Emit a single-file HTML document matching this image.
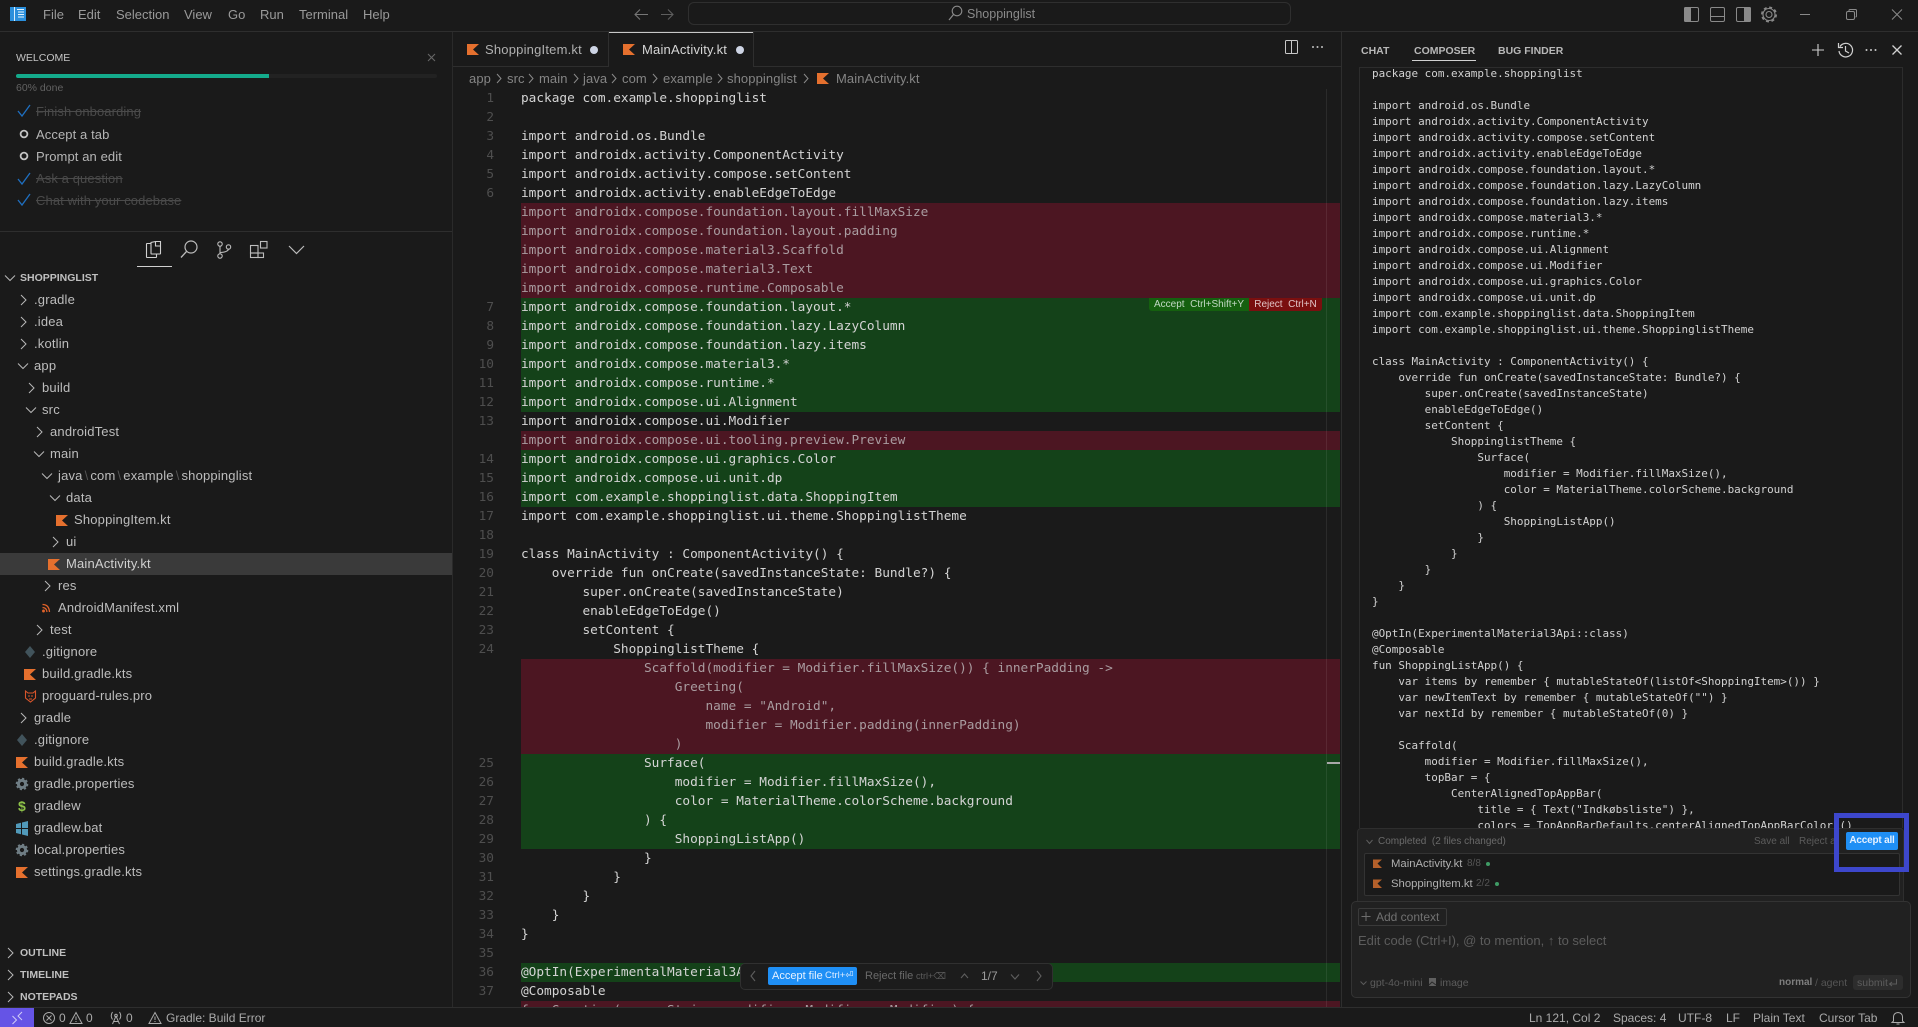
<!DOCTYPE html>
<html><head><meta charset="utf-8"><title>Shoppinglist</title>
<style>
html,body{margin:0;padding:0;background:#1a1a1a;width:1918px;height:1027px;overflow:hidden}
body{position:relative;font-family:"Liberation Sans",sans-serif;font-size:13px;color:#bbb}
.a{position:absolute;white-space:pre}
.m{top:4px;line-height:21px;font-size:13px;color:#9a9a9a}
.t{height:22px;line-height:22px;font-size:13px;color:#bdbdbd;letter-spacing:.18px}
.s{line-height:22px;height:22px;font-size:13px;letter-spacing:.1px}
.d{color:#4a4a4a;text-decoration:line-through}
.h{font-size:10.5px;font-weight:bold;color:#c0c0c0;line-height:22px;height:22px}
.b{top:67px;line-height:23px;color:#858585;font-size:13px;letter-spacing:.1px}
.r{height:19px;left:521px;width:819px}
.red{background:#4c1622}
.grn{background:#144219}
pre{margin:0;font-family:"DejaVu Sans Mono","Liberation Mono",monospace}
.st{top:1009px;height:18px;line-height:18px;font-size:12px;color:#aaa}
.tab{font-size:10.5px;font-weight:bold;color:#b8b8b8;top:40px;line-height:22px}
.f{font-size:10px;color:#6a6a6a;line-height:16px;height:16px}
i{font-style:normal}
.dm{color:#a99ca0}
</style></head><body>

<!-- frames -->
<div class="a" style="left:0;top:31px;width:1918px;height:1px;background:#2e2e2e"></div>
<div class="a" style="left:452px;top:32px;width:1px;height:975px;background:#2a2a2a"></div>
<div class="a" style="left:1341px;top:32px;width:1px;height:975px;background:#2e2e2e"></div>
<div class="a" style="left:0;top:1007px;width:1918px;height:1px;background:#2e2e2e"></div>

<!-- menu -->
<div class="a m" style="left:43px">File</div>
<div class="a m" style="left:78px">Edit</div>
<div class="a m" style="left:116px">Selection</div>
<div class="a m" style="left:184px">View</div>
<div class="a m" style="left:228px">Go</div>
<div class="a m" style="left:260px">Run</div>
<div class="a m" style="left:299px">Terminal</div>
<div class="a m" style="left:363px">Help</div>
<div class="a" style="left:688px;top:2px;width:601px;height:21px;border:1px solid #2f2f2f;border-radius:6px"></div>
<div class="a" style="left:967px;top:4px;line-height:21px;font-size:12.5px;color:#8a8a8a">Shoppinglist</div>

<!-- welcome -->
<div class="a" style="left:16px;top:49px;line-height:18px;font-size:10.5px;color:#c4c4c4">WELCOME</div>
<div class="a" style="left:16px;top:74px;width:421px;height:4px;background:#222;border-radius:2px"></div>
<div class="a" style="left:16px;top:74px;width:253px;height:4px;background:#14ab8c;border-radius:2px 0 0 2px"></div>
<div class="a" style="left:16px;top:79px;line-height:19px;font-size:10.5px;color:#626262">60% done</div>
<div class="a s d" style="left:36px;top:101px">Finish onboarding</div>
<div class="a s" style="left:36px;top:124px;color:#b5b5b5">Accept a tab</div>
<div class="a s" style="left:36px;top:146px;color:#b5b5b5">Prompt an edit</div>
<div class="a s d" style="left:36px;top:168px">Ask a question</div>
<div class="a s d" style="left:36px;top:190px">Chat with your codebase</div>
<div class="a" style="left:0;top:231px;width:452px;height:1px;background:#2e2e2e"></div>
<div class="a" style="left:137px;top:266px;width:35px;height:1px;background:#d0d0d0"></div>
<div class="a h" style="left:20px;top:267px">SHOPPINGLIST</div>

<!-- tree -->
<div class="a" style="left:0;top:553px;width:452px;height:22px;background:#3a3a3a"></div>
<div class="a t" style="left:34px;top:289px">.gradle</div>
<div class="a t" style="left:34px;top:311px">.idea</div>
<div class="a t" style="left:34px;top:333px">.kotlin</div>
<div class="a t" style="left:34px;top:355px">app</div>
<div class="a t" style="left:42px;top:377px">build</div>
<div class="a t" style="left:42px;top:399px">src</div>
<div class="a t" style="left:50px;top:421px">androidTest</div>
<div class="a t" style="left:50px;top:443px">main</div>
<div class="a t" style="left:58px;top:465px">java<i style="color:#555;margin:0 2px">\</i>com<i style="color:#555;margin:0 2px">\</i>example<i style="color:#555;margin:0 2px">\</i>shoppinglist</div>
<div class="a t" style="left:66px;top:487px">data</div>
<div class="a t" style="left:74px;top:509px">ShoppingItem.kt</div>
<div class="a t" style="left:66px;top:531px">ui</div>
<div class="a t" style="left:66px;top:553px;color:#d0d0d0">MainActivity.kt</div>
<div class="a t" style="left:58px;top:575px">res</div>
<div class="a t" style="left:58px;top:597px">AndroidManifest.xml</div>
<div class="a t" style="left:50px;top:619px">test</div>
<div class="a t" style="left:42px;top:641px">.gitignore</div>
<div class="a t" style="left:42px;top:663px">build.gradle.kts</div>
<div class="a t" style="left:42px;top:685px">proguard-rules.pro</div>
<div class="a t" style="left:34px;top:707px">gradle</div>
<div class="a t" style="left:34px;top:729px">.gitignore</div>
<div class="a t" style="left:34px;top:751px">build.gradle.kts</div>
<div class="a t" style="left:34px;top:773px">gradle.properties</div>
<div class="a t" style="left:34px;top:795px">gradlew</div>
<div class="a" style="left:18px;top:795px;height:22px;line-height:22px;font-size:14px;font-weight:bold;color:#8dc149">$</div>
<div class="a t" style="left:34px;top:817px">gradlew.bat</div>
<div class="a t" style="left:34px;top:839px">local.properties</div>
<div class="a t" style="left:34px;top:861px">settings.gradle.kts</div>
<div class="a h" style="left:20px;top:942px">OUTLINE</div>
<div class="a h" style="left:20px;top:964px">TIMELINE</div>
<div class="a h" style="left:20px;top:986px">NOTEPADS</div>

<!-- tabs -->
<div class="a" style="left:453px;top:66px;width:156px;height:1px;background:#2e2e2e"></div>
<div class="a" style="left:753px;top:66px;width:588px;height:1px;background:#2e2e2e"></div>
<div class="a" style="left:608px;top:32px;width:1px;height:34px;background:#2e2e2e"></div>
<div class="a" style="left:753px;top:32px;width:1px;height:34px;background:#2e2e2e"></div>
<div class="a" style="left:609px;top:32px;width:144px;height:1px;background:#c8c8c8"></div>
<div class="a" style="left:485px;top:39px;line-height:22px;font-size:13px;color:#b0b0b0;letter-spacing:.2px">ShoppingItem.kt</div>
<div class="a" style="left:642px;top:39px;line-height:22px;font-size:13px;color:#d6d6d6;letter-spacing:.2px">MainActivity.kt</div>
<div class="a" style="left:590px;top:46px;width:8px;height:8px;border-radius:50%;background:#cdd4e4"></div>
<div class="a" style="left:736px;top:46px;width:8px;height:8px;border-radius:50%;background:#cdd4e4"></div>

<!-- breadcrumb -->
<div class="a b" style="left:469px">app</div>
<div class="a b" style="left:507px">src</div>
<div class="a b" style="left:539px">main</div>
<div class="a b" style="left:583px">java</div>
<div class="a b" style="left:622px">com</div>
<div class="a b" style="left:663px">example</div>
<div class="a b" style="left:727px">shoppinglist</div>
<div class="a b" style="left:836px">MainActivity.kt</div>

<!-- editor -->
<div class="a" style="left:453px;top:89px;width:887px;height:918px;overflow:hidden">
<div style="position:absolute;left:-453px;top:-89px;width:1340px;height:1007px">
<div class="a r red" style="top:203px;height:95px"></div>
<div class="a r grn" style="top:298px;height:114px"></div>
<div class="a r red" style="top:431px"></div>
<div class="a r grn" style="top:450px;height:57px"></div>
<div class="a r red" style="top:659px;height:95px"></div>
<div class="a r grn" style="top:754px;height:95px"></div>
<div class="a r grn" style="top:963px"></div>
<div class="a r red" style="top:1001px;height:6px"></div>
<div class="a" style="left:1326px;top:89px;width:1px;height:918px;background:rgba(255,255,255,.08)"></div>
<div class="a" style="left:1327px;top:762px;width:13px;height:2px;background:#a8a8a8"></div>
<div class="a" style="left:1149px;top:298px;width:100px;height:13px;background:#15600f;border-radius:0 0 0 3px;color:#c2d8c4;font-size:10px;line-height:14px;text-align:center">Accept  Ctrl+Shift+Y</div>
<div class="a" style="left:1249px;top:298px;width:73px;height:13px;background:#7a0f0f;border-radius:0 0 3px 0;color:#e0c4c6;font-size:10px;line-height:14px;text-align:center">Reject  Ctrl+N</div>
<pre class="a" style="left:440px;top:89px;width:54px;height:918px;overflow:hidden;text-align:right;font-size:12.78px;line-height:19px;color:#4e4e4e">1
2
3
4
5
6





7
8
9
10
11
12
13

14
15
16
17
18
19
20
21
22
23
24





25
26
27
28
29
30
31
32
33
34
35
36
37</pre>
<pre class="a" style="left:521px;top:89px;height:918px;overflow:hidden;font-size:12.78px;line-height:19px;color:#d4d4d4">package com.example.shoppinglist

import android.os.Bundle
import androidx.activity.ComponentActivity
import androidx.activity.compose.setContent
import androidx.activity.enableEdgeToEdge
<i class="dm">import androidx.compose.foundation.layout.fillMaxSize
import androidx.compose.foundation.layout.padding
import androidx.compose.material3.Scaffold
import androidx.compose.material3.Text
import androidx.compose.runtime.Composable</i>
import androidx.compose.foundation.layout.*
import androidx.compose.foundation.lazy.LazyColumn
import androidx.compose.foundation.lazy.items
import androidx.compose.material3.*
import androidx.compose.runtime.*
import androidx.compose.ui.Alignment
import androidx.compose.ui.Modifier
<i class="dm">import androidx.compose.ui.tooling.preview.Preview</i>
import androidx.compose.ui.graphics.Color
import androidx.compose.ui.unit.dp
import com.example.shoppinglist.data.ShoppingItem
import com.example.shoppinglist.ui.theme.ShoppinglistTheme

class MainActivity : ComponentActivity() {
    override fun onCreate(savedInstanceState: Bundle?) {
        super.onCreate(savedInstanceState)
        enableEdgeToEdge()
        setContent {
            ShoppinglistTheme {
<i class="dm">                Scaffold(modifier = Modifier.fillMaxSize()) { innerPadding -&gt;
                    Greeting(
                        name = "Android",
                        modifier = Modifier.padding(innerPadding)
                    )</i>
                Surface(
                    modifier = Modifier.fillMaxSize(),
                    color = MaterialTheme.colorScheme.background
                ) {
                    ShoppingListApp()
                }
            }
        }
    }
}

@OptIn(ExperimentalMaterial3Api::class)
@Composable
<i class="dm">fun Greeting(name: String, modifier: Modifier = Modifier) {</i></pre>
</div></div>

<!-- floating toolbar -->
<div class="a" style="left:740px;top:963px;width:311px;height:25px;background:#1c1c1c;border:1px solid #303030;border-radius:5px"></div>
<div class="a" style="left:768px;top:967px;width:89px;height:18px;background:#1f8ff5;border-radius:2px"></div>
<div class="a" style="left:772px;top:967px;line-height:18px;font-size:11px;color:#e8f2ff">Accept file</div>
<div class="a" style="left:825px;top:967px;line-height:18px;font-size:9.5px;color:#dcebff;font-family:'Liberation Sans','DejaVu Sans',sans-serif">Ctrl+⏎</div>
<div class="a" style="left:865px;top:967px;line-height:18px;font-size:11px;color:#6a6a6a">Reject file</div>
<div class="a" style="left:916px;top:967px;line-height:18px;font-size:9px;color:#5c5c5c;font-family:'Liberation Sans','DejaVu Sans',sans-serif">ctrl+⌫</div>
<div class="a" style="left:981px;top:967px;line-height:18px;font-size:12px;color:#9c9c9c">1/7</div>

<!-- composer -->
<div class="a tab" style="left:1361px">CHAT</div>
<div class="a tab" style="left:1414px">COMPOSER</div>
<div class="a tab" style="left:1498px">BUG FINDER</div>
<div class="a" style="left:1412px;top:60px;width:64px;height:1px;background:#d0d0d0"></div>
<div class="a" style="left:1359px;top:67px;width:542px;height:760px;border:1px solid #2c2c2c;border-bottom:0"></div>
<div class="a" style="left:1360px;top:68px;width:541px;height:760px;overflow:hidden">
<pre class="a" style="left:12px;top:-2px;font-size:10.95px;line-height:16px;color:#d2d2d2">package com.example.shoppinglist

import android.os.Bundle
import androidx.activity.ComponentActivity
import androidx.activity.compose.setContent
import androidx.activity.enableEdgeToEdge
import androidx.compose.foundation.layout.*
import androidx.compose.foundation.lazy.LazyColumn
import androidx.compose.foundation.lazy.items
import androidx.compose.material3.*
import androidx.compose.runtime.*
import androidx.compose.ui.Alignment
import androidx.compose.ui.Modifier
import androidx.compose.ui.graphics.Color
import androidx.compose.ui.unit.dp
import com.example.shoppinglist.data.ShoppingItem
import com.example.shoppinglist.ui.theme.ShoppinglistTheme

class MainActivity : ComponentActivity() {
    override fun onCreate(savedInstanceState: Bundle?) {
        super.onCreate(savedInstanceState)
        enableEdgeToEdge()
        setContent {
            ShoppinglistTheme {
                Surface(
                    modifier = Modifier.fillMaxSize(),
                    color = MaterialTheme.colorScheme.background
                ) {
                    ShoppingListApp()
                }
            }
        }
    }
}

@OptIn(ExperimentalMaterial3Api::class)
@Composable
fun ShoppingListApp() {
    var items by remember { mutableStateOf(listOf&lt;ShoppingItem&gt;()) }
    var newItemText by remember { mutableStateOf("") }
    var nextId by remember { mutableStateOf(0) }

    Scaffold(
        modifier = Modifier.fillMaxSize(),
        topBar = {
            CenterAlignedTopAppBar(
                title = { Text("Indkøbsliste") },
                colors = TopAppBarDefaults.centerAlignedTopAppBarColors()</pre>
</div>

<!-- completed panel -->
<div class="a" style="left:1357px;top:828px;width:545px;height:80px;background:#212121;border:1px solid #2e2e2e;border-radius:4px 4px 0 0"></div>
<div class="a f" style="left:1378px;top:834px">Completed  (2 files changed)</div>
<div class="a f" style="left:1754px;top:834px;color:#5c5c5c">Save all</div>
<div class="a f" style="left:1799px;top:834px;color:#5c5c5c;width:35px;overflow:hidden">Reject all</div>
<div class="a" style="left:1846px;top:832px;width:52px;height:18px;background:#1f8ff5;border-radius:2px;color:#e6f1ff;font-size:10px;font-weight:bold;letter-spacing:-.2px;line-height:18px;text-align:center">Accept all</div>
<div class="a" style="left:1364px;top:853px;width:534px;height:41px;background:#1a1a1a;border:1px solid #333;border-radius:2px"></div>
<div class="a" style="left:1391px;top:856px;line-height:16px;font-size:11.3px;color:#b0b0b0">MainActivity.kt</div>
<div class="a" style="left:1467px;top:856px;line-height:16px;font-size:10px;color:#555">8/8</div>
<div class="a" style="left:1486px;top:862px;width:4px;height:4px;border-radius:50%;background:#3f9b65"></div>
<div class="a" style="left:1391px;top:876px;line-height:16px;font-size:11.3px;color:#b0b0b0">ShoppingItem.kt</div>
<div class="a" style="left:1476px;top:876px;line-height:16px;font-size:10px;color:#555">2/2</div>
<div class="a" style="left:1495px;top:882px;width:4px;height:4px;border-radius:50%;background:#3f9b65"></div>

<!-- input -->
<div class="a" style="left:1351px;top:901px;width:558px;height:95px;background:#212121;border:1px solid #333;border-radius:5px"></div>
<div class="a" style="left:1358px;top:908px;width:87px;height:16px;border:1px solid #3a3a3a;border-radius:2px"></div>
<div class="a" style="left:1376px;top:908px;line-height:18px;font-size:12px;color:#717171">Add context</div>
<div class="a" style="left:1358px;top:932px;line-height:18px;font-size:13px;color:#5c5c5c;font-family:'Liberation Sans','DejaVu Sans',sans-serif">Edit code (Ctrl+I), @ to mention, ↑ to select</div>
<div class="a" style="left:1370px;top:975px;line-height:16px;font-size:10.5px;color:#5c5c5c">gpt-4o-mini</div>
<div class="a" style="left:1440px;top:975px;line-height:16px;font-size:10.5px;color:#5c5c5c">image</div>
<div class="a" style="left:1779px;top:975px;line-height:16px;font-size:10px;font-weight:bold;color:#7e7e7e">normal</div>
<div class="a" style="left:1815px;top:975px;line-height:16px;font-size:10.5px;color:#555">/ agent</div>
<div class="a" style="left:1853px;top:975px;width:50px;height:15px;background:#2d2d2d;border-radius:3px"></div>
<div class="a" style="left:1857px;top:975px;line-height:16px;font-size:10.5px;color:#5c5c5c">submit</div>

<!-- status -->
<div class="a" style="left:0;top:1008px;width:34px;height:19px;background:#6554e6"></div>
<div class="a st" style="left:59px">0</div>
<div class="a st" style="left:86px">0</div>
<div class="a st" style="left:126px">0</div>
<div class="a st" style="left:166px">Gradle: Build Error</div>
<div class="a st" style="left:1529px">Ln 121, Col 2</div>
<div class="a st" style="left:1613px">Spaces: 4</div>
<div class="a st" style="left:1678px">UTF-8</div>
<div class="a st" style="left:1726px">LF</div>
<div class="a st" style="left:1753px">Plain Text</div>
<div class="a st" style="left:1819px">Cursor Tab</div>

<!-- all icons -->
<svg class="a" style="left:0;top:0" width="1918" height="1027" viewBox="0 0 1918 1027" fill="none">
<defs>
<path id="k" d="M0 0H12L6 5.5L12 11H0Z" fill="#e5702e"/>
<path id="r" d="M-2-5 3 0-2 5" stroke="#b8b8b8" stroke-width="1"/>
<path id="w" d="M-5-2.5 0 2.5 5-2.5" stroke="#b8b8b8" stroke-width="1"/>
<g id="g"><circle r="3.6" stroke="#6f7d84" stroke-width="3"/><circle r="5.4" stroke="#6f7d84" stroke-width="1.8" stroke-dasharray="2.2 2"/></g>
<path id="cb" d="M-6 0-2 5 6-6" stroke="#1f6fc0" stroke-width="1.3"/>
</defs>
<!-- logo -->
<rect x="10" y="7" width="16" height="14" fill="#2a8fdc"/>
<rect x="14" y="7" width="1" height="14" fill="#d8eefc"/>
<path d="M17 9.5H24M18 12H24M18 14.5H24M18 17H24" stroke="#e6f4fd" stroke-width="1"/>
<!-- nav -->
<path d="M648 14.5H635M640 9.5 635 14.5 640 19.5" stroke="#777" stroke-width="1.1"/>
<path d="M661 14.5H673M668 9.5 673 14.5 668 19.5" stroke="#5e5e5e" stroke-width="1.1"/>
<circle cx="957" cy="11" r="4.8" stroke="#8a8a8a" stroke-width="1.1"/><path d="M953.5 14.5 949 20" stroke="#8a8a8a" stroke-width="1.2"/>
<!-- window icons -->
<rect x="1684.5" y="7.5" width="14" height="14" rx="1.5" stroke="#8a8a8a"/><rect x="1684" y="7" width="7" height="15" rx="1.5" fill="#8a8a8a"/>
<rect x="1710.5" y="7.5" width="14" height="14" rx="1.5" stroke="#8a8a8a"/><path d="M1711 16.5H1724" stroke="#8a8a8a"/>
<rect x="1736.5" y="7.5" width="14" height="14" rx="1.5" stroke="#8a8a8a"/><rect x="1744" y="7" width="7" height="15" rx="1.5" fill="#8a8a8a"/>
<circle cx="1769" cy="14.5" r="3" stroke="#8a8a8a" stroke-width="1.1"/><circle cx="1769" cy="14.5" r="6" stroke="#8a8a8a" stroke-width="1.1"/><circle cx="1769" cy="14.5" r="7.2" stroke="#8a8a8a" stroke-width="1.6" stroke-dasharray="3 2.65"/>
<path d="M1800 14.5H1810" stroke="#8a8a8a" stroke-width="1"/>
<rect x="1846.5" y="11.5" width="8" height="8" rx="1.5" stroke="#8a8a8a"/><path d="M1849 11V10.5Q1849 9.5 1850 9.5H1855.5Q1856.5 9.5 1856.5 10.5V16Q1856.5 17 1855.5 17" stroke="#8a8a8a"/>
<path d="M1892 9.5 1902 19.5M1902 9.5 1892 19.5" stroke="#8a8a8a" stroke-width="1"/>
<!-- welcome -->
<path d="M428 54 435 61M435 54 428 61" stroke="#666" stroke-width="1.1"/>
<use href="#cb" x="24" y="111"/><use href="#cb" x="24" y="179"/><use href="#cb" x="24" y="200"/>
<circle cx="24" cy="134" r="3.4" stroke="#c4c4c4" stroke-width="1.8"/><circle cx="24" cy="156" r="3.4" stroke="#c4c4c4" stroke-width="1.8"/>
<!-- activity icons -->
<path d="M150.5 243.5H147Q146.500 243.500 146.500 244V257Q146.500 257.500 147 257.500H156Q156.500 257.500 156.500 257V254" stroke="#d0d0d0" stroke-width="1.1"/>
<path d="M151 246V242.500L155.500 241.500H160.500V253.500Q160.500 254 160 254H151.500Q151 254 151 253.500V246M155.500 241.500V246H160.500" stroke="#d0d0d0" stroke-width="1.1"/>
<circle cx="191" cy="247" r="6" stroke="#bcbcbc" stroke-width="1.2"/><path d="M186.500 251.500 181 257.500" stroke="#bcbcbc" stroke-width="1.3"/>
<circle cx="220" cy="244" r="2.2" stroke="#bcbcbc" stroke-width="1.1"/><circle cx="220" cy="256" r="2.2" stroke="#bcbcbc" stroke-width="1.1"/><circle cx="228.500" cy="247" r="2.2" stroke="#bcbcbc" stroke-width="1.1"/><path d="M220 246V254M228.500 249.200Q228 252 220.500 252.500" stroke="#bcbcbc" stroke-width="1.1"/>
<rect x="250.500" y="245.500" width="7.500" height="7.500" stroke="#bcbcbc" stroke-width="1.1"/><rect x="250.500" y="253" width="7.500" height="4.500" stroke="#bcbcbc" stroke-width="1.1"/><rect x="258" y="253" width="5.500" height="4.500" stroke="#bcbcbc" stroke-width="1.1"/><rect x="260.500" y="241.500" width="6.500" height="6.500" stroke="#bcbcbc" stroke-width="1.1"/>
<path d="M289 246 296.500 253.500 304 246" stroke="#bcbcbc" stroke-width="1.2"/>
<!-- tree chevrons -->
<use href="#w" x="10" y="278"/>
<use href="#r" x="23" y="300"/><use href="#r" x="23" y="322"/><use href="#r" x="23" y="344"/>
<use href="#w" x="23" y="366"/><use href="#r" x="31" y="388"/><use href="#w" x="31" y="410"/>
<use href="#r" x="39" y="432"/><use href="#w" x="39" y="454"/><use href="#w" x="47" y="476"/>
<use href="#w" x="55" y="498"/><use href="#r" x="55" y="542"/><use href="#r" x="47" y="586"/>
<use href="#r" x="39" y="630"/><use href="#r" x="23" y="718"/>
<use href="#r" x="10" y="953"/><use href="#r" x="10" y="975"/><use href="#r" x="10" y="997"/>
<!-- tree icons -->
<use href="#k" x="56" y="515"/><use href="#k" x="48" y="559"/>
<use href="#k" x="24" y="669"/><use href="#k" x="16" y="757"/><use href="#k" x="16" y="867"/>
<g stroke="#e0622a" stroke-width="1.3"><path d="M42.500 604.500Q49 604.500 49.500 612M42.500 607.500Q46.500 607.500 47 612"/><circle cx="43.500" cy="611" r=".8" fill="#e0622a"/></g>
<path d="M30 646 35 652 30 658 25 652Z" fill="#41535b"/><path d="M22 734 27 740 22 746 17 740Z" fill="#41535b"/>
<path d="M25.500 691 28 693H33L35.500 691V698L30.500 702 25.500 698Z" stroke="#d9552b" stroke-width="1.1"/><path d="M28 696H30M31 696H33M29 699H32" stroke="#d9552b"/>
<use href="#g" x="22" y="784"/><use href="#g" x="22" y="850"/>
<path d="M16 824 21 822.800V828H16ZM22 822.500 28 821V828H22ZM16 829H21V834.200L16 833ZM22 829H28V836L22 834.500Z" fill="#519aba"/>
<!-- tab / breadcrumb icons -->
<use href="#k" x="467" y="44"/><use href="#k" x="623" y="44"/><use href="#k" x="817" y="73"/>
<g stroke="#8a8a8a" stroke-width="1"><path d="M497 74 501 78.500 497 83M529 74 533 78.500 529 83M574 74 578 78.500 574 83M612 74 616 78.500 612 83M653 74 657 78.500 653 83M718 74 722 78.500 718 83M804 74 808 78.500 804 83"/></g>
<!-- split + dots -->
<rect x="1285.500" y="40.500" width="12" height="13" rx="1" stroke="#c8c8c8"/><path d="M1291.500 40V54" stroke="#c8c8c8"/>
<g fill="#c0c0c0"><circle cx="1313" cy="47" r="1"/><circle cx="1317.500" cy="47" r="1"/><circle cx="1322" cy="47" r="1"/></g>
<!-- panel icons -->
<path d="M1812 50H1824M1818 44V56" stroke="#d0d0d0" stroke-width="1.1"/>
<path d="M1840 46.500A6.800 6.800 0 1 1 1839 51M1838.500 43V47.500H1843M1845.500 46V51L1849 53" stroke="#d0d0d0" stroke-width="1.2"/>
<g fill="#c8c8c8"><circle cx="1866.500" cy="50" r="1"/><circle cx="1871" cy="50" r="1"/><circle cx="1875.500" cy="50" r="1"/></g>
<path d="M1892.500 45.500 1901.500 54.500M1901.500 45.500 1892.500 54.500" stroke="#d0d0d0" stroke-width="1.3"/>
<!-- toolbar chevrons -->
<g stroke="#5e5e5e" stroke-width="1.1"><path d="M755 971 751 976 755 981M961 978 964.500 974 968 978M1011 974.500 1015 979 1019 974.500M1037 971 1041 976 1037 981"/></g>
<!-- completed -->
<path d="M1366.500 840 1369.500 843.500 1372.500 840" stroke="#5e5e5e"/>
<path d="M1373 859.500H1382L1377.500 863.500 1382 868H1373Z" fill="#b4602b"/>
<path d="M1373 879.500H1382L1377.500 883.500 1382 888H1373Z" fill="#b4602b"/>
<path d="M1366 912V921M1361.500 916.500H1370.500" stroke="#6e6e6e"/>
<path d="M1360.500 981.500 1363.500 984.500 1366.500 981.500" stroke="#5a5a5a"/>
<rect x="1429" y="978" width="7" height="8" fill="#606060"/><path d="M1429 985 1432 982 1436 985" stroke="#2a2a2a"/>
<path d="M1896.500 979V984H1890M1892 982 1889.500 984 1892 986" stroke="#5c5c5c"/>
<!-- highlight -->
<rect x="1836.500" y="815.500" width="70" height="54" stroke="#3d47cc" stroke-width="5"/>
<!-- status icons -->
<path d="M12.500 1016 16.500 1020 12.500 1024M22 1012 18 1016 22 1020" stroke="#d0ccf6" stroke-width="1"/>
<circle cx="49" cy="1018" r="5.500" stroke="#aaa"/><path d="M46.500 1015.500 51.500 1020.500M51.500 1015.500 46.500 1020.500" stroke="#aaa"/>
<path d="M76 1012.500 82 1023.500H70ZM76 1016.500V1020M76 1021V1022" stroke="#aaa"/>
<path d="M116 1016 112.500 1024M116 1016 119.500 1024M113.500 1021.500H118.500M112.500 1012Q110 1016 112.500 1019.500M119.500 1012Q122 1016 119.500 1019.500" stroke="#aaa"/><circle cx="116" cy="1015.500" r="1.300" stroke="#aaa"/>
<path d="M155 1012.500 161 1023.500H149ZM155 1016.500V1020M155 1021V1022" stroke="#aaa"/>
<path d="M1898 1012.500Q1893.500 1013 1893.500 1017V1021L1892 1022.500H1904L1902.500 1021V1017Q1902.500 1013 1898 1012.500ZM1896.500 1024H1899.500" stroke="#aaa"/>
</svg>
</body></html>
